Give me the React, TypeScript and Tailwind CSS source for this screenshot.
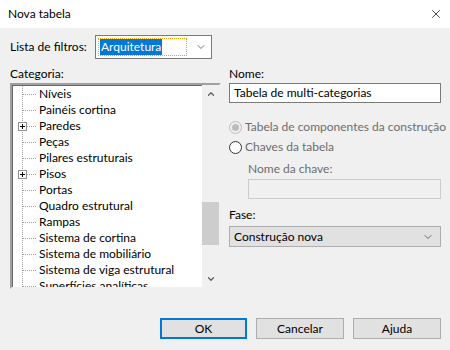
import { X, ChevronDown, ChevronUp } from "lucide-react";

const CATEGORIES: { name: string; expandable?: boolean }[] = [
  { name: "Níveis" },
  { name: "Painéis cortina" },
  { name: "Paredes", expandable: true },
  { name: "Peças" },
  { name: "Pilares estruturais" },
  { name: "Pisos", expandable: true },
  { name: "Portas" },
  { name: "Quadro estrutural" },
  { name: "Rampas" },
  { name: "Sistema de cortina" },
  { name: "Sistema de mobiliário" },
  { name: "Sistema de viga estrutural" },
  { name: "Superfícies analíticas" },
];

function TreeConnector({ expandable }: { expandable?: boolean }) {
  return (
    <svg width="26" height="16" viewBox="0 0 26 16" className="shrink-0">
      <line x1="10.5" y1="0" x2="10.5" y2="16" stroke="#a0a0a0" strokeDasharray="1 1" />
      <line x1="11" y1="8.5" x2="25" y2="8.5" stroke="#a0a0a0" strokeDasharray="1 1" />
      {expandable && (
        <g>
          <rect x="6.5" y="4.5" width="8" height="8" fill="#fff" stroke="#919191" />
          <line x1="8" y1="8.5" x2="13" y2="8.5" stroke="#000" />
          <line x1="10.5" y1="6" x2="10.5" y2="11" stroke="#000" />
        </g>
      )}
    </svg>
  );
}

function RadioOption({ label, checked }: { label: string; checked?: boolean }) {
  return (
    <div className="flex h-[20px] items-center gap-[3px] whitespace-nowrap">
      <span
        className={`flex h-[13px] w-[13px] shrink-0 items-center justify-center rounded-full border ${
          checked ? "border-[#bcbcbc] bg-[#f0f0f0]" : "border-[#333] bg-white"
        }`}
      >
        {checked && <span className="h-[7px] w-[7px] rounded-full bg-[#bcbcbc]" />}
      </span>
      <span className="text-[#6d6d6d]">{label}</span>
    </div>
  );
}

export default function App() {
  return (
    <div
      className="flex h-[350px] w-[450px] flex-col overflow-hidden bg-[#f0f0f0] text-[12px] leading-[16px] text-black"
      style={{ fontFamily: 'Lato, "Noto Sans", sans-serif' }}
    >
      {/* title bar */}
      <div className="flex h-[28px] shrink-0 items-center justify-between bg-white pl-[8px] pr-[7px]">
        <span>Nova tabela</span>
        <X className="h-[14px] w-[14px] text-black" strokeWidth={1.2} />
      </div>

      <div className="flex flex-1 flex-col pl-[10px] pr-[9px]">
        {/* filter list */}
        <div className="mt-[7px] flex items-center">
          <span className="w-[85px]">Lista de filtros:</span>
          <div className="flex h-[24px] w-[117px] items-center border border-[#7a7a7a] bg-white pl-[2px] pr-[4px]">
            <div className="flex h-[18px] flex-1 items-center border border-dotted border-[#f59f00] px-[1px]">
              <span className="bg-[#0078d7] px-[1px] text-white">Arquitetura</span>
            </div>
            <ChevronDown className="ml-[8px] h-[12px] w-[12px] text-[#444]" strokeWidth={1.5} />
          </div>
        </div>

        <div className="mt-[7px] flex gap-[8px]">
          {/* category tree */}
          <div className="flex w-[212px] flex-col">
            <span>Categoria:</span>
            <div className="mt-[1px] flex h-[206px] border-2 border-t-[#a0a0a0] border-l-[#a0a0a0] border-r-[#f0f0f0] border-b-[#f0f0f0] bg-white shadow-[inset_1px_1px_0_#696969]">
              <div className="flex flex-1 flex-col overflow-hidden pt-[1px]">
                {CATEGORIES.map((c) => (
                  <div key={c.name} className="flex h-[16px] shrink-0 items-center">
                    <TreeConnector expandable={c.expandable} />
                    <span className="ml-[1px] whitespace-nowrap">{c.name}</span>
                  </div>
                ))}
              </div>
              <div className="flex w-[17px] flex-col bg-[#f0f0f0]">
                <div className="flex h-[17px] items-center justify-center">
                  <ChevronUp className="h-[10px] w-[10px] text-[#606060]" strokeWidth={3} />
                </div>
                <div className="flex-1">
                  <div className="mx-auto mt-[100px] h-[43px] w-[17px] bg-[#cdcdcd]" />
                </div>
                <div className="flex h-[17px] items-center justify-center">
                  <ChevronDown className="h-[10px] w-[10px] text-[#606060]" strokeWidth={3} />
                </div>
              </div>
            </div>
          </div>

          {/* right column */}
          <div className="flex w-[212px] flex-col">
            <span>Nome:</span>
            <div className="mt-[1px] flex h-[20px] items-center border border-[#7a7a7a] bg-white px-[4px]">
              Tabela de multi-categorias
            </div>

            <div className="mt-[14px] flex flex-col">
              <RadioOption label="Tabela de componentes da construção" checked />
              <RadioOption label="Chaves da tabela" />
            </div>

            <div className="ml-[19px] mt-[4px] flex flex-col">
              <span className="text-[#6d6d6d]">Nome da chave:</span>
              <div className="mt-[2px] h-[20px] border border-[#cccccc] bg-[#f0f0f0]" />
            </div>

            <span className="mt-[8px]">Fase:</span>
            <div className="mt-[3px] flex h-[21px] items-center justify-between border border-[#adadad] bg-[#e1e1e1] pl-[4px] pr-[6px]">
              <span>Construção nova</span>
              <ChevronDown className="h-[12px] w-[12px] text-[#444]" strokeWidth={1.5} />
            </div>
          </div>
        </div>

        {/* buttons */}
        <div className="mb-[11px] mt-auto flex justify-end gap-[9px]">
          <button className="h-[21px] w-[87px] border-2 border-[#0078d7] bg-[#e1e1e1]">OK</button>
          <button className="h-[21px] w-[88px] border border-[#adadad] bg-[#e1e1e1]">Cancelar</button>
          <button className="h-[21px] w-[88px] border border-[#adadad] bg-[#e1e1e1]">Ajuda</button>
        </div>
      </div>
    </div>
  );
}
